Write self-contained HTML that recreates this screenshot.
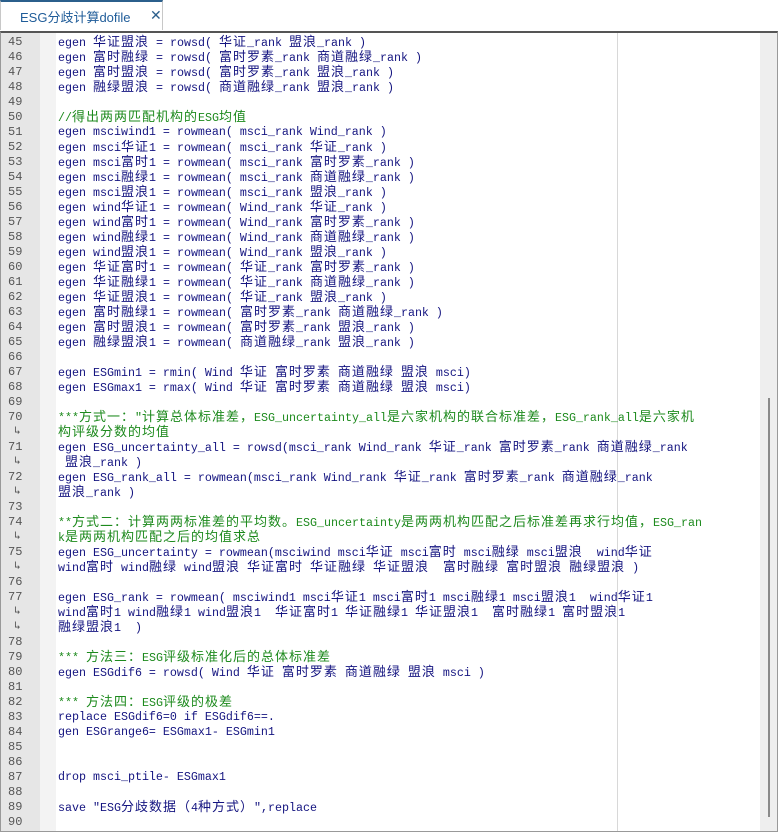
<!DOCTYPE html>
<html><head><meta charset="utf-8">
<style>
html,body{margin:0;padding:0;width:780px;height:834px;overflow:hidden;background:#fff;}
body{position:relative;font-family:"Liberation Mono","Noto Sans CJK SC",monospace;}
#tabbar{position:absolute;left:0;top:0;width:780px;height:31px;background:#fff;}
#tab{position:absolute;left:0;top:0;width:163px;height:30px;border-top:2px solid #2b5f8c;border-right:1px solid #c8c8c8;border-left:1px solid #c8c8c8;box-sizing:border-box;background:#fff;}
#tab .t{position:absolute;left:19px;top:5px;font-family:"Liberation Sans","Noto Sans CJK SC",sans-serif;font-size:13px;color:#1f5c99;}
#tab .x{position:absolute;left:149px;top:5px;font-family:"Liberation Sans",sans-serif;font-size:14px;color:#2b5f8c;}
#editor{position:absolute;left:0;top:31px;width:778px;height:801px;border-top:2px solid #555;border-left:1px solid #999;border-right:1px solid #999;border-bottom:1px solid #999;box-sizing:border-box;overflow:hidden;}
#gut{position:absolute;left:0;top:0;width:39px;height:100%;background:#e6e6e6;}
#gut2{position:absolute;left:39px;top:0;width:16px;height:100%;background:#f3f3f3;}
#vline{position:absolute;left:616px;top:0;width:1px;height:100%;background:#d8d8d8;}
#sb{position:absolute;left:759px;top:0;width:18px;height:100%;background:#eeeeee;}
#thumb{position:absolute;left:767px;top:365px;width:2px;height:419px;background:#8a8a8a;}
#rows{position:absolute;left:0;top:2px;width:760px;}
#rows div{position:relative;height:15px;line-height:15px;font-size:11.67px;white-space:pre;}
.n{position:absolute;left:7px;top:0;color:#555;font-size:12px;}
.w{position:absolute;left:13px;top:0;color:#555;font-size:11px;}
.c{position:absolute;left:57px;top:0;color:#141480;}
.g{color:#1d8a1d;}
i{font-style:normal;font-size:13px;letter-spacing:1px;}
</style></head><body>
<div id="tabbar"><div id="tab"><span class="t">ESG分歧计算dofile</span><span class="x">✕</span></div></div>
<div id="editor">
<div id="gut"></div><div id="gut2"></div><div id="vline"></div><div id="sb"></div><div id="thumb"></div>
<div id="rows">
<div><span class="n">45</span><span class="c">egen <i>华证盟浪</i> = rowsd( <i>华证</i>_rank <i>盟浪</i>_rank )</span></div>
<div><span class="n">46</span><span class="c">egen <i>富时融绿</i> = rowsd( <i>富时罗素</i>_rank <i>商道融绿</i>_rank )</span></div>
<div><span class="n">47</span><span class="c">egen <i>富时盟浪</i> = rowsd( <i>富时罗素</i>_rank <i>盟浪</i>_rank )</span></div>
<div><span class="n">48</span><span class="c">egen <i>融绿盟浪</i> = rowsd( <i>商道融绿</i>_rank <i>盟浪</i>_rank )</span></div>
<div><span class="n">49</span></div>
<div><span class="n">50</span><span class="c g">//<i>得出两两匹配机构的</i>ESG<i>均值</i></span></div>
<div><span class="n">51</span><span class="c">egen msciwind1 = rowmean( msci_rank Wind_rank )</span></div>
<div><span class="n">52</span><span class="c">egen msci<i>华证</i>1 = rowmean( msci_rank <i>华证</i>_rank )</span></div>
<div><span class="n">53</span><span class="c">egen msci<i>富时</i>1 = rowmean( msci_rank <i>富时罗素</i>_rank )</span></div>
<div><span class="n">54</span><span class="c">egen msci<i>融绿</i>1 = rowmean( msci_rank <i>商道融绿</i>_rank )</span></div>
<div><span class="n">55</span><span class="c">egen msci<i>盟浪</i>1 = rowmean( msci_rank <i>盟浪</i>_rank )</span></div>
<div><span class="n">56</span><span class="c">egen wind<i>华证</i>1 = rowmean( Wind_rank <i>华证</i>_rank )</span></div>
<div><span class="n">57</span><span class="c">egen wind<i>富时</i>1 = rowmean( Wind_rank <i>富时罗素</i>_rank )</span></div>
<div><span class="n">58</span><span class="c">egen wind<i>融绿</i>1 = rowmean( Wind_rank <i>商道融绿</i>_rank )</span></div>
<div><span class="n">59</span><span class="c">egen wind<i>盟浪</i>1 = rowmean( Wind_rank <i>盟浪</i>_rank )</span></div>
<div><span class="n">60</span><span class="c">egen <i>华证富时</i>1 = rowmean( <i>华证</i>_rank <i>富时罗素</i>_rank )</span></div>
<div><span class="n">61</span><span class="c">egen <i>华证融绿</i>1 = rowmean( <i>华证</i>_rank <i>商道融绿</i>_rank )</span></div>
<div><span class="n">62</span><span class="c">egen <i>华证盟浪</i>1 = rowmean( <i>华证</i>_rank <i>盟浪</i>_rank )</span></div>
<div><span class="n">63</span><span class="c">egen <i>富时融绿</i>1 = rowmean( <i>富时罗素</i>_rank <i>商道融绿</i>_rank )</span></div>
<div><span class="n">64</span><span class="c">egen <i>富时盟浪</i>1 = rowmean( <i>富时罗素</i>_rank <i>盟浪</i>_rank )</span></div>
<div><span class="n">65</span><span class="c">egen <i>融绿盟浪</i>1 = rowmean( <i>商道融绿</i>_rank <i>盟浪</i>_rank )</span></div>
<div><span class="n">66</span></div>
<div><span class="n">67</span><span class="c">egen ESGmin1 = rmin( Wind <i>华证</i> <i>富时罗素</i> <i>商道融绿</i> <i>盟浪</i> msci)</span></div>
<div><span class="n">68</span><span class="c">egen ESGmax1 = rmax( Wind <i>华证</i> <i>富时罗素</i> <i>商道融绿</i> <i>盟浪</i> msci)</span></div>
<div><span class="n">69</span></div>
<div><span class="n">70</span><span class="c g">***<i>方式一：</i>"<i>计算总体标准差，</i>ESG_uncertainty_all<i>是六家机构的联合标准差，</i>ESG_rank_all<i>是六家机</i></span></div>
<div><span class="w">↳</span><span class="c g"><i>构评级分数的均值</i></span></div>
<div><span class="n">71</span><span class="c">egen ESG_uncertainty_all = rowsd(msci_rank Wind_rank <i>华证</i>_rank <i>富时罗素</i>_rank <i>商道融绿</i>_rank</span></div>
<div><span class="w">↳</span><span class="c"> <i>盟浪</i>_rank )</span></div>
<div><span class="n">72</span><span class="c">egen ESG_rank_all = rowmean(msci_rank Wind_rank <i>华证</i>_rank <i>富时罗素</i>_rank <i>商道融绿</i>_rank</span></div>
<div><span class="w">↳</span><span class="c"><i>盟浪</i>_rank )</span></div>
<div><span class="n">73</span></div>
<div><span class="n">74</span><span class="c g">**<i>方式二：计算两两标准差的平均数。</i>ESG_uncertainty<i>是两两机构匹配之后标准差再求行均值，</i>ESG_ran</span></div>
<div><span class="w">↳</span><span class="c g">k<i>是两两机构匹配之后的均值求总</i></span></div>
<div><span class="n">75</span><span class="c">egen ESG_uncertainty = rowmean(msciwind msci<i>华证</i> msci<i>富时</i> msci<i>融绿</i> msci<i>盟浪</i>  wind<i>华证</i></span></div>
<div><span class="w">↳</span><span class="c">wind<i>富时</i> wind<i>融绿</i> wind<i>盟浪</i> <i>华证富时</i> <i>华证融绿</i> <i>华证盟浪</i>  <i>富时融绿</i> <i>富时盟浪</i> <i>融绿盟浪</i> )</span></div>
<div><span class="n">76</span></div>
<div><span class="n">77</span><span class="c">egen ESG_rank = rowmean( msciwind1 msci<i>华证</i>1 msci<i>富时</i>1 msci<i>融绿</i>1 msci<i>盟浪</i>1  wind<i>华证</i>1</span></div>
<div><span class="w">↳</span><span class="c">wind<i>富时</i>1 wind<i>融绿</i>1 wind<i>盟浪</i>1  <i>华证富时</i>1 <i>华证融绿</i>1 <i>华证盟浪</i>1  <i>富时融绿</i>1 <i>富时盟浪</i>1</span></div>
<div><span class="w">↳</span><span class="c"><i>融绿盟浪</i>1  )</span></div>
<div><span class="n">78</span></div>
<div><span class="n">79</span><span class="c g">*** <i>方法三：</i>ESG<i>评级标准化后的总体标准差</i></span></div>
<div><span class="n">80</span><span class="c">egen ESGdif6 = rowsd( Wind <i>华证</i> <i>富时罗素</i> <i>商道融绿</i> <i>盟浪</i> msci )</span></div>
<div><span class="n">81</span></div>
<div><span class="n">82</span><span class="c g">*** <i>方法四：</i>ESG<i>评级的极差</i></span></div>
<div><span class="n">83</span><span class="c">replace ESGdif6=0 if ESGdif6==.</span></div>
<div><span class="n">84</span><span class="c">gen ESGrange6= ESGmax1- ESGmin1</span></div>
<div><span class="n">85</span></div>
<div><span class="n">86</span></div>
<div><span class="n">87</span><span class="c">drop msci_ptile- ESGmax1</span></div>
<div><span class="n">88</span></div>
<div><span class="n">89</span><span class="c">save "ESG<i>分歧数据（</i>4<i>种方式）</i>",replace</span></div>
<div><span class="n">90</span></div>
</div>
</div>
</body></html>
